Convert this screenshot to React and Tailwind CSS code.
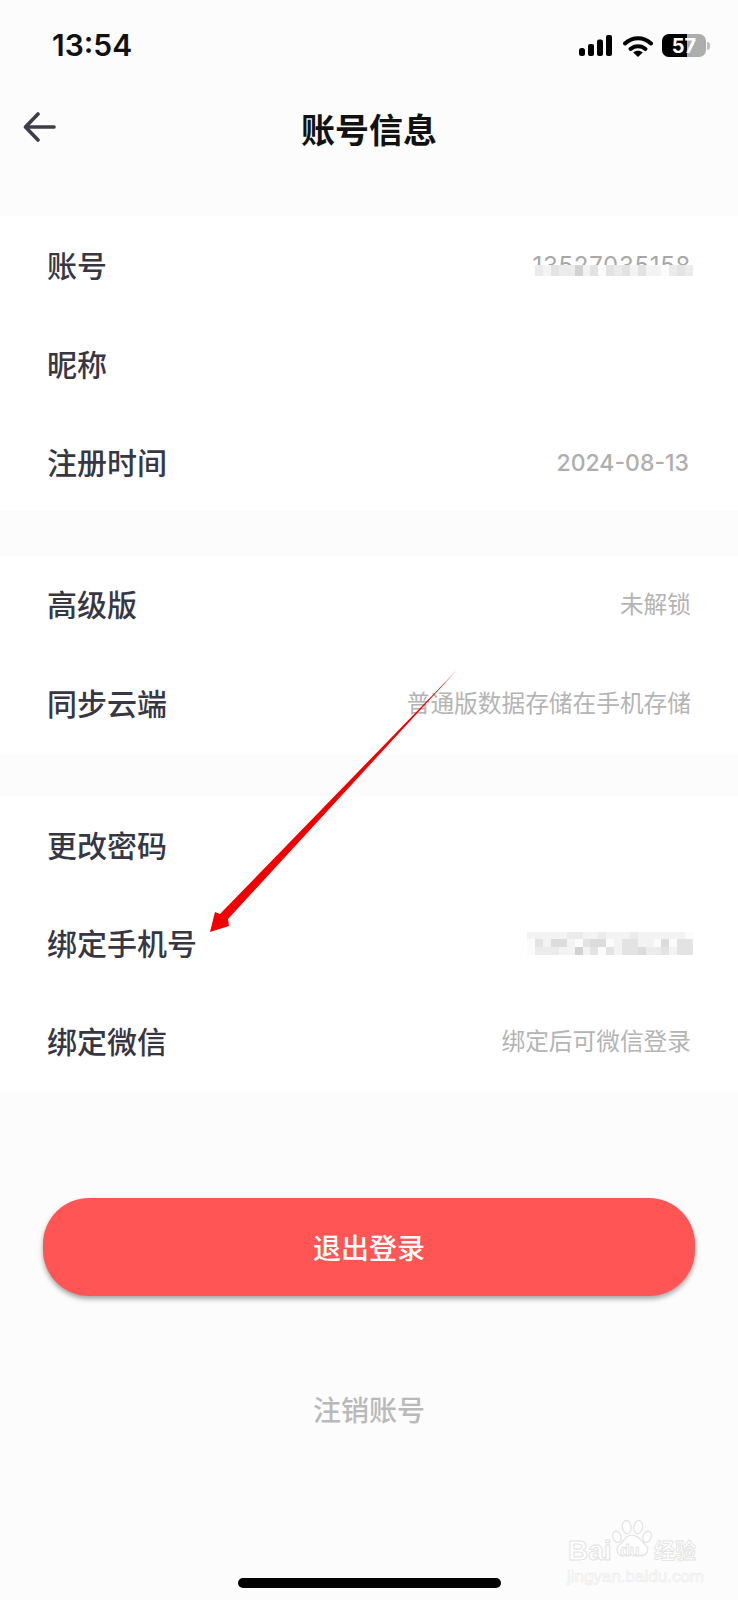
import React from 'react';

const cjk = "font-['Noto_Sans_CJK_SC','Noto_Sans',sans-serif]";

// pixelated strips that hide the phone numbers
const shades = {
  0: 'bg-[#fbfbfb]',
  1: 'bg-[#f3f3f3]',
  2: 'bg-[#ebebeb]',
  3: 'bg-[#e3e3e3]',
  4: 'bg-[#dcdcdc]',
  5: 'bg-[#d2d2d2]',
};

const accountMosaic = [[2, 1, 3, 2, 2, 5, 1, 3, 0, 3, 2, 3, 1, 3, 1, 1, 0, 2, 3, 2]];

const phoneMosaic = [
  [1, 1, 1, 1, 1, 2, 2, 1, 1, 2, 1, 1, 1, 2, 1, 1, 1, 1, 1, 1, 0],
  [0, 3, 1, 4, 4, 1, 0, 3, 4, 4, 0, 1, 3, 3, 1, 1, 0, 4, 0, 3, 3],
  [0, 2, 2, 2, 1, 1, 5, 1, 3, 0, 3, 1, 3, 3, 4, 2, 2, 3, 1, 3, 3],
];

const Mosaic = ({ rows, className }) => (
  <div className={`flex flex-col ${className}`}>
    {rows.map((row, i) => (
      <div key={i} className="flex flex-1">
        {row.map((s, j) => (
          <div key={j} className={`w-[7.9px] h-full ${shades[s]}`} />
        ))}
      </div>
    ))}
  </div>
);

const Row = ({ label, value, className = '', children }) => (
  <div className={`h-[98.4px] flex items-center justify-between pl-[47px] pr-[47px] ${className}`}>
    <span className={`text-[30px] font-medium text-[#373744] ${cjk}`}>{label}</span>
    {value && <span className={`text-[23.7px] text-[#b4b4b4] ${cjk}`}>{value}</span>}
    {children}
  </div>
);

const Section = ({ children, className = '' }) => (
  <div className={`bg-white ${className}`}>{children}</div>
);

const SignalIcon = () => (
  <svg width="33" height="21" viewBox="0 0 33 21">
    <rect x="0" y="13" width="6" height="8" rx="2.5" fill="#000" />
    <rect x="9" y="9" width="6" height="12" rx="2" fill="#000" />
    <rect x="18" y="4.5" width="6" height="16.5" rx="2" fill="#000" />
    <rect x="27" y="0" width="6" height="21" rx="2" fill="#000" />
  </svg>
);

const WifiIcon = () => (
  <svg width="30" height="22" viewBox="0 0 30 22" fill="none">
    <path d="M2 8.5C9.5 1.5 20.5 1.5 28 8.5" stroke="#000" strokeWidth="4" strokeLinecap="round" />
    <path d="M7.5 14C11.8 10.2 18.2 10.2 22.5 14" stroke="#000" strokeWidth="4" strokeLinecap="round" />
    <path d="M15 22L10.2 17.4C13 15.3 17 15.3 19.8 17.4Z" fill="#000" />
  </svg>
);

const BatteryIcon = () => (
  <div className="flex items-center gap-[1px]">
    <div className="relative w-[44px] h-[23px] rounded-[7px] overflow-hidden bg-[#adadad]">
      <div className="h-full w-[25px] bg-black" />
      <span className="absolute inset-0 flex items-center justify-center text-[20px] leading-none font-bold text-white font-['Inter',sans-serif]">
        57
      </span>
    </div>
    <div className="w-[3px] h-[8px] rounded-r-full bg-[#bdbdbd]" />
  </div>
);

const BaiduWatermark = () => (
  <div className="absolute left-[566px] top-[1518px] w-[136px] h-[68px] pointer-events-none">
    <svg className="absolute left-[44px] top-[2px]" width="44" height="39" viewBox="0 0 46 44" fill="#fff" stroke="#e4e4e4" strokeWidth="1.5">
      <ellipse cx="6" cy="19" rx="4.5" ry="6.5" transform="rotate(-20 6 19)" />
      <ellipse cx="17" cy="8" rx="5" ry="7.5" transform="rotate(-8 17 8)" />
      <ellipse cx="30" cy="8" rx="5" ry="7.5" transform="rotate(8 30 8)" />
      <ellipse cx="40" cy="19" rx="4.5" ry="6.5" transform="rotate(20 40 19)" />
      <path d="M23 17C31 17 33 24 38 28C44 33 39 42 31 40C26 39 20 39 15 40C7 42 3 33 9 28C14 24 15 17 23 17Z" />
    </svg>
    <span className="absolute left-[2px] top-[19px] text-[28px] leading-none font-bold text-white [-webkit-text-stroke:1px_#e2e2e2] font-['Liberation_Sans',sans-serif]">
      Bai
    </span>
    <span className="absolute left-[54px] top-[25px] text-[16px] leading-none font-bold text-white [-webkit-text-stroke:0.8px_#e2e2e2] font-['Liberation_Sans',sans-serif]">
      du
    </span>
    <span className={`absolute left-[88px] top-[21px] text-[21px] leading-none font-bold text-white [-webkit-text-stroke:0.8px_#e2e2e2] ${cjk}`}>
      经验
    </span>
    <span className="absolute left-[1px] top-[50px] text-[17px] leading-none text-white [-webkit-text-stroke:0.7px_#ececec] font-['Liberation_Sans',sans-serif]">
      jingyan.baidu.com
    </span>
  </div>
);

export default function App() {
  return (
    <div className="relative w-[738px] h-[1600px] overflow-hidden bg-[#fcfcfc]">
      {/* status bar */}
      <div className="h-[90px] flex items-center justify-between pl-[52px] pr-[28px] pt-[1px]">
        <span className="text-[30px] font-semibold text-[#111] font-['Inter',sans-serif]">13:54</span>
        <div className="flex items-center">
          <SignalIcon />
          <div className="ml-[11px] mr-[9px]">
            <WifiIcon />
          </div>
          <BatteryIcon />
        </div>
      </div>

      {/* nav */}
      <div className="h-[80px] grid grid-cols-[100px_1fr_100px] items-center pb-[4px]">
        <button className="pl-[23px] flex -mt-[2px]">
          <svg width="33" height="30" viewBox="0 0 33 30" fill="none" stroke="#3c3c4b" strokeWidth="3.6" strokeLinecap="round" strokeLinejoin="round">
            <path d="M31 15H3" />
            <path d="M15 2L2.5 15L15 28" />
          </svg>
        </button>
        <h1 className={`text-center text-[34px] font-bold text-[#111] ${cjk}`}>账号信息</h1>
        <div />
      </div>

      <Section className="mt-[46px]">
        <Row label="账号" className="pb-[1px]">
          <div className="relative mt-[2px]">
            <span className="block text-[24px] leading-[18px] tracking-[0.7px] text-[#a8a8a8] font-['Inter',sans-serif]">
              13527035158
            </span>
            <Mosaic rows={accountMosaic} className="absolute -right-[2px] top-[8px] h-[11px] bg-white" />
          </div>
        </Row>
        <Row label="昵称" className="pb-[1px]" />
        <Row label="注册时间">
          <span className="mr-[2px] mt-[3px] text-[23px] font-medium text-[#aeaeae] font-['Inter',sans-serif]">2024-08-13</span>
        </Row>
      </Section>

      <Section className="mt-[45px]">
        <Row label="高级版" value="未解锁" className="pb-[3px]" />
        <Row label="同步云端" value="普通版数据存储在手机存储" className="pb-[2px]" />
      </Section>

      <Section className="mt-[43px]">
        <Row label="更改密码" className="pb-[2px]" />
        <Row label="绑定手机号" className="pb-[3px]">
          <Mosaic rows={phoneMosaic} className="h-[23px] -mr-[2px] mt-[2px]" />
        </Row>
        <Row label="绑定微信" value="绑定后可微信登录" className="pb-[2px]" />
      </Section>

      <div className="mt-[107px] px-[43px]">
        <button className={`w-full h-[98px] rounded-[46px] bg-[#ff5555] text-white text-[28px] font-medium shadow-[0_3px_5px_rgba(0,0,0,0.35)] ${cjk}`}>
          退出登录
        </button>
      </div>

      <div className={`mt-[92px] h-[42px] flex items-center justify-center text-[28px] font-medium text-[#b9b9b9] ${cjk}`}>
        注销账号
      </div>

      {/* home indicator */}
      <div className="mt-[148px] mx-auto w-[263px] h-[10px] rounded-full bg-black" />

      <BaiduWatermark />

      {/* annotation arrow on top of the screenshot */}
      <svg className="absolute left-0 top-0 pointer-events-none" width="738" height="1600" viewBox="0 0 738 1600">
        <polygon points="457,670 228,919 229,926 210,932 215,912 220,914" fill="#f20000" />
      </svg>
    </div>
  );
}
